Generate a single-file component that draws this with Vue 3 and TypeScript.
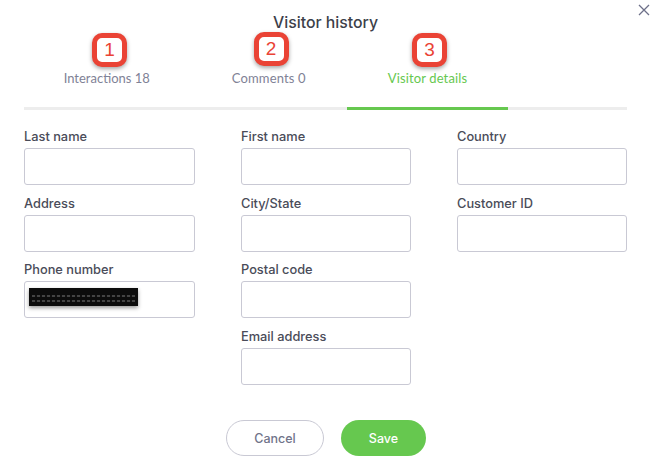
<template>
  <div class="dialog">
    <button class="close" aria-label="Close">
      <svg width="12" height="12" viewBox="0 0 12 12" fill="none" stroke="#6d7089" stroke-width="1.3">
        <path d="M1 1l10 10M11 1L1 11" />
      </svg>
    </button>

    <h1 class="title">Visitor history</h1>

    <!-- Tabs with annotation badges on top -->
    <div class="tabs">
      <div
        v-for="tab in tabs"
        :key="tab.step"
        class="tab"
        :class="{ active: tab.active }"
      >
        <span class="badge">{{ tab.step }}</span>
        <span class="tab-label">{{ tab.label }}</span>
      </div>
    </div>

    <div class="columns">
      <div v-for="(col, i) in columns" :key="i" class="column">
        <div v-for="field in col" :key="field" class="field">
          <label class="label">{{ field }}</label>
          <div class="input">
            <div v-if="field === 'Phone number'" class="redacted">
              <span class="redacted-line"></span>
              <span class="redacted-line"></span>
            </div>
          </div>
        </div>
      </div>
    </div>

    <div class="actions">
      <button class="btn cancel">Cancel</button>
      <button class="btn save">Save</button>
    </div>
  </div>
</template>

<script setup lang="ts">
const tabs = [
  { step: 1, label: 'Interactions 18', active: false },
  { step: 2, label: 'Comments 0', active: false },
  { step: 3, label: 'Visitor details', active: true }
]

const columns: string[][] = [
  ['Last name', 'Address', 'Phone number'],
  ['First name', 'City/State', 'Postal code', 'Email address'],
  ['Country', 'Customer ID']
]
</script>

<style>
html,
body {
  margin: 0;
  background: #fff;
}
</style>

<style scoped>
.dialog {
  position: relative;
  width: 654px;
  height: 458px;
  overflow: hidden;
  box-sizing: border-box;
  padding: 13px 27px 0 24px;
  background: #fff;
  font-family: Lato, "Liberation Sans", sans-serif;
  color: #3d3f4d;
}

.close {
  position: absolute;
  top: 4px;
  right: 4px;
  padding: 0;
  border: 0;
  background: none;
  line-height: 0;
}

.title {
  margin: 0;
  text-align: center;
  font-family: Inter, sans-serif;
  font-size: 15.8px;
  line-height: 20px;
  font-weight: 500;
  color: #3d3f4a;
}

.tabs {
  display: flex;
  height: 74px;
  border-bottom: 3px solid #ededed;
}

.tab {
  position: relative;
  width: 161.5px;
  height: 74px;
  text-align: center;
  border-bottom: 3px solid transparent;
}

.tab.active {
  width: 161px;
  border-bottom-color: #66c84f;
}

.tab-label {
  position: absolute;
  top: 37px;
  left: 4px;
  right: 0;
  font-size: 13px;
  line-height: 16px;
  color: #7f8296;
}

.tab:nth-child(2) .tab-label {
  left: 5px;
  letter-spacing: 0.01em;
}

.tab.active .tab-label {
  color: #66c84f;
  left: 0;
  letter-spacing: 0.01em;
}

.badge {
  position: absolute;
  top: 0;
  left: 68px;
  width: 35px;
  height: 34px;
  box-sizing: border-box;
  border: 5px solid #ea4335;
  border-radius: 10px;
  background: #fff;
  box-shadow: 0 2px 4px rgba(0, 0, 0, 0.35);
  color: #ea4335;
  font-size: 19px;
  line-height: 24px;
  font-family: "Liberation Sans", sans-serif;
}

.tab:nth-child(2) .badge {
  left: 68px;
  top: -1px;
}

.tab:nth-child(3) .badge {
  left: 65px;
}

.columns {
  display: grid;
  grid-template-columns: 171px 170px 170px;
  gap: 46px;
  margin-top: 19px;
}

.column {
  display: flex;
  flex-direction: column;
  gap: 10.67px;
}

.field {
  display: flex;
  flex-direction: column;
  gap: 3px;
}

.label {
  font-family: Inter, sans-serif;
  font-size: 12.8px;
  line-height: 16px;
  font-weight: 500;
  color: #4a4c59;
}

.input {
  height: 37px;
  box-sizing: border-box;
  border: 1px solid #c9c9d4;
  border-radius: 3px;
  background: #fff;
  position: relative;
}

.redacted {
  position: absolute;
  top: 6px;
  left: 4px;
  width: 109px;
  height: 18px;
  background: #0c0c0c;
  box-shadow: 0 2px 4px rgba(0, 0, 0, 0.4);
  display: flex;
  flex-direction: column;
  justify-content: flex-end;
  gap: 3px;
  padding-bottom: 4px;
  box-sizing: border-box;
}

.redacted-line {
  height: 2px;
  margin: 0 3px;
  background: repeating-linear-gradient(90deg, #444 0 3px, #111 3px 5px);
}

.actions {
  position: absolute;
  left: 226px;
  top: 420px;
  display: flex;
  gap: 17px;
}

.btn {
  height: 36px;
  border-radius: 18px;
  font-family: Inter, sans-serif;
  font-size: 12.5px;
  font-weight: 500;
  padding: 0;
}

.cancel {
  width: 98px;
  border: 1px solid #c9c9d4;
  background: #fff;
  color: #71748a;
}

.save {
  width: 85px;
  border: 0;
  background: #66c84f;
  color: #fff;
}
</style>
